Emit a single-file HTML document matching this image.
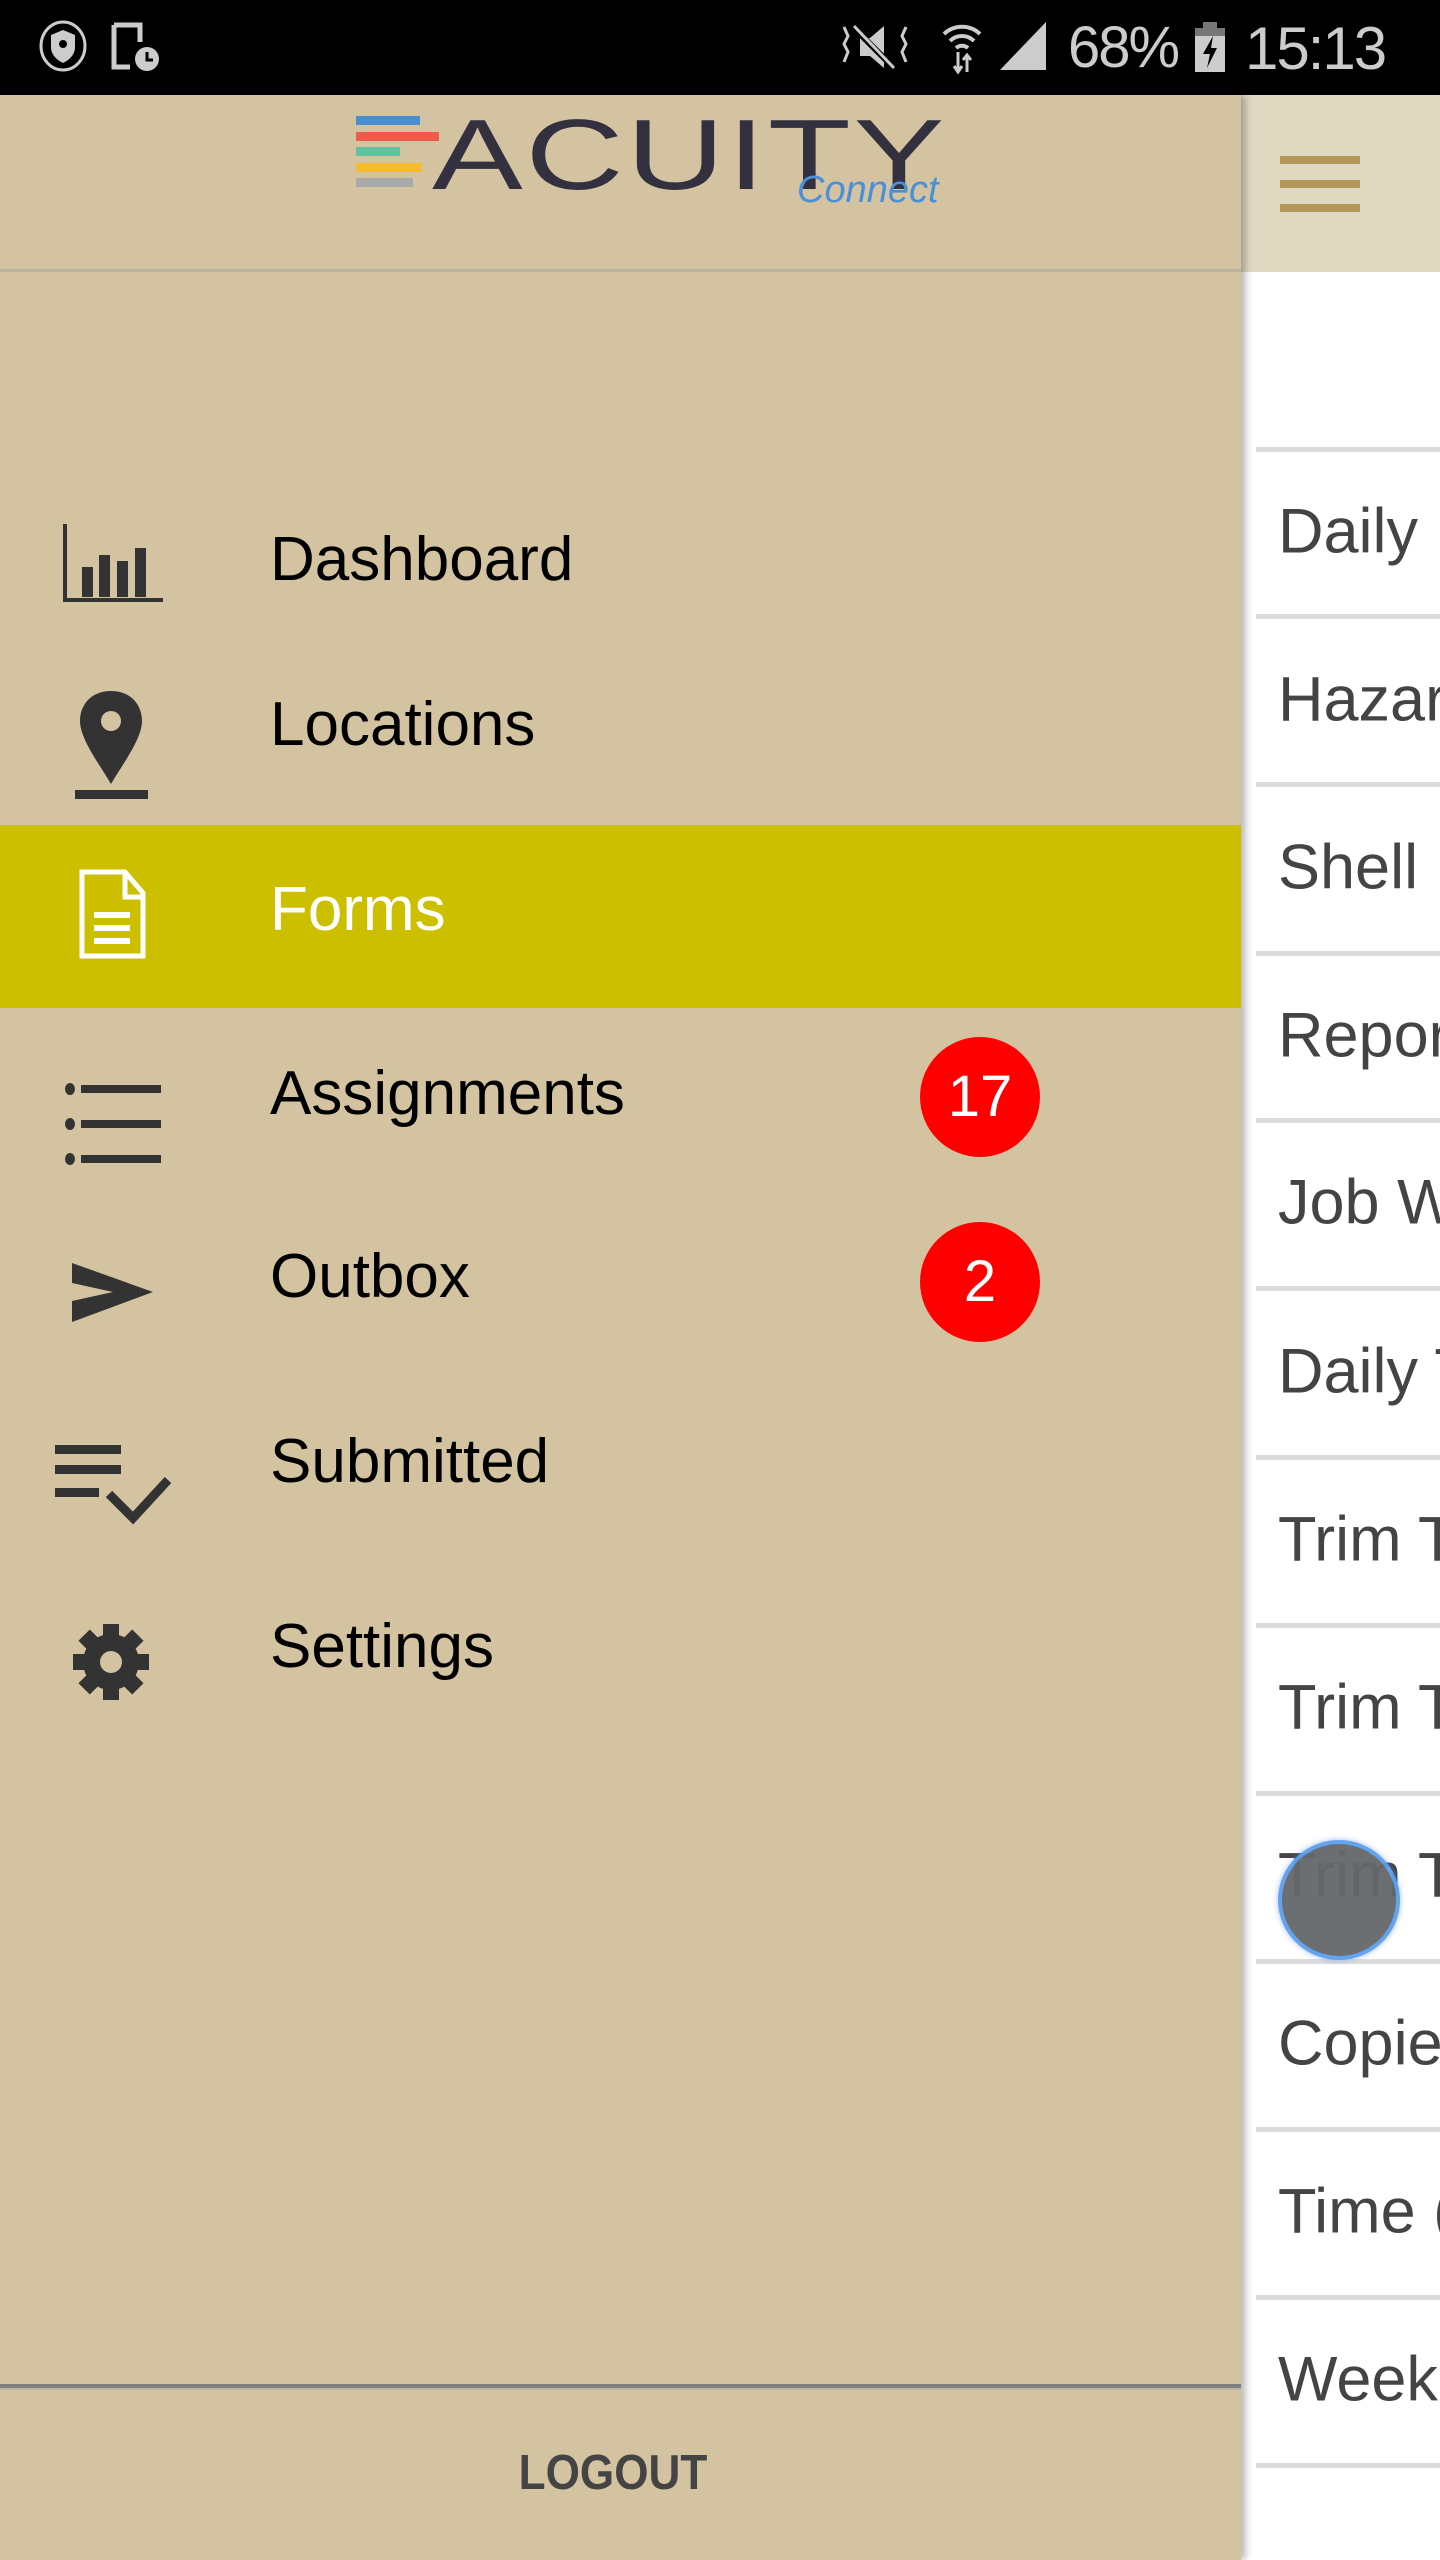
<!DOCTYPE html>
<html><head><meta charset="utf-8"><style>
*{margin:0;padding:0;box-sizing:border-box}
body{width:1440px;height:2560px;position:relative;overflow:hidden;background:#fff;font-family:"Liberation Sans",sans-serif}
.abs{position:absolute}
#status{left:0;top:0;width:1440px;height:95px;background:#000}
#drawer{left:0;top:95px;width:1241px;height:2465px;background:#d3c3a0;box-shadow:4px 0 8px rgba(0,0,0,.3);z-index:2}
#rhead{left:1241px;top:95px;width:199px;height:177px;background:#e2d9c2}
.ham{left:1280px;width:80px;height:8px;background:#b3965a}
.item{position:absolute;left:270px;font-size:62px;color:#000;line-height:1;transform:translateY(-50%)}
.ico{position:absolute;left:51px;width:120px;height:120px;transform:translateY(-50%)}
.badge{position:absolute;left:920px;width:120px;height:120px;border-radius:50%;background:#f00;color:#fff;font-size:58px;text-align:center;line-height:120px;transform:translateY(-50%)}
.sep{position:absolute;left:1256px;width:184px;height:5px;background:#dcdcdc}
.rt{position:absolute;left:1278px;font-size:63px;color:#444;white-space:nowrap;line-height:1;transform:translateY(-50%)}
</style></head><body>
<div id="status" class="abs">
<svg class="abs" style="left:38px;top:20px" width="50" height="52" viewBox="0 0 50 52"><ellipse cx="25" cy="26" rx="22" ry="24" fill="none" stroke="#ccc" stroke-width="3"/><path d="M25 10 L37 15 V27 C37 35 31 40 25 43 C19 40 13 35 13 27 V15Z" fill="#ccc"/><circle cx="25" cy="24" r="4" fill="#000"/></svg>
<svg class="abs" style="left:110px;top:22px" width="50" height="50" viewBox="0 0 50 50"><path d="M4 3 H30 V20 M4 3 V45 H20" fill="none" stroke="#ccc" stroke-width="5"/><circle cx="37" cy="37" r="12" fill="#ccc"/><path d="M37 30 V38 H43" stroke="#000" stroke-width="3" fill="none"/></svg>
<svg class="abs" style="left:840px;top:22px" width="70" height="50" viewBox="0 0 70 50"><path d="M4 5 L8 14 L4 22 L8 30 L4 40 M66 5 L62 14 L66 22 L62 30 L66 40" stroke="#ccc" stroke-width="3" fill="none"/><path d="M20 16 H30 L44 4 V46 L30 34 H20Z" fill="#ccc"/><path d="M14 6 L56 48" stroke="#000" stroke-width="6"/><path d="M14 4 L54 46" stroke="#ccc" stroke-width="3"/></svg>
<svg class="abs" style="left:940px;top:20px" width="44" height="54" viewBox="0 0 44 54"><path d="M4 14 A26 26 0 0 1 40 14 M10 21 A17 17 0 0 1 34 21 M16 28 A9 9 0 0 1 28 28" stroke="#ccc" stroke-width="4" fill="none"/><path d="M18 32 V52 M14 46 L18 52 L22 46 M27 52 V36 M23 40 L27 35 L31 40" stroke="#ccc" stroke-width="3" fill="none"/></svg>
<svg class="abs" style="left:1000px;top:22px" width="48" height="50" viewBox="0 0 48 50"><path d="M46 0 V48 H0Z" fill="#ccc"/></svg>
<div class="abs" style="left:1068px;top:14px;font-size:58px;color:#ccc;letter-spacing:-2px">68%</div>
<svg class="abs" style="left:1193px;top:22px" width="34" height="50" viewBox="0 0 34 50"><rect x="10" y="0" width="14" height="6" fill="#777"/><rect x="2" y="6" width="30" height="44" fill="#ccc"/><rect x="2" y="6" width="30" height="8" fill="#777"/><path d="M20 14 L10 32 H17 L14 46 L24 26 H18Z" fill="#000"/></svg>
<div class="abs" style="left:1245px;top:14px;font-size:60px;color:#ccc;letter-spacing:-2px">15:13</div>
</div>
<div id="rhead" class="abs"></div>
<div class="abs ham" style="top:156px"></div>
<div class="abs ham" style="top:180px"></div>
<div class="abs ham" style="top:204px"></div>
<div class="sep" style="top:447px"></div>
<div class="rt" style="top:532px">Daily I</div>
<div class="sep" style="top:614px"></div>
<div class="rt" style="top:700px">Hazard</div>
<div class="sep" style="top:782px"></div>
<div class="rt" style="top:868px">Shell I</div>
<div class="sep" style="top:951px"></div>
<div class="rt" style="top:1036px">Report</div>
<div class="sep" style="top:1118px"></div>
<div class="rt" style="top:1203px">Job W</div>
<div class="sep" style="top:1286px"></div>
<div class="rt" style="top:1372px">Daily T</div>
<div class="sep" style="top:1455px"></div>
<div class="rt" style="top:1540px">Trim T</div>
<div class="sep" style="top:1623px"></div>
<div class="rt" style="top:1708px">Trim T</div>
<div class="sep" style="top:1791px"></div>
<div class="rt" style="top:1876px">Trim T</div>
<div class="sep" style="top:1959px"></div>
<div class="rt" style="top:2044px">Copies</div>
<div class="sep" style="top:2127px"></div>
<div class="rt" style="top:2212px">Time (</div>
<div class="sep" style="top:2295px"></div>
<div class="rt" style="top:2380px">Weekly</div>
<div class="sep" style="top:2463px"></div>
<div class="abs" style="left:1278px;top:1840px;width:122px;height:120px;border-radius:50%;background:#66676b;border:4px solid #5aa0f0;box-shadow:0 0 6px rgba(90,130,240,.6);z-index:3;opacity:.95"></div>

<div id="drawer" class="abs">
<div class="abs" style="left:356px;top:21px;width:64px;height:9px;background:#4a8ed0"></div>
<div class="abs" style="left:356px;top:37px;width:83px;height:9px;background:#f05a4a"></div>
<div class="abs" style="left:356px;top:52px;width:44px;height:9px;background:#62c29e"></div>
<div class="abs" style="left:356px;top:68px;width:66px;height:9px;background:#f5bd2e"></div>
<div class="abs" style="left:356px;top:83px;width:57px;height:9px;background:#a9a9a9"></div>
<div class="abs" style="left:432px;top:10px;font-size:100px;color:#33313f;letter-spacing:2px;line-height:1;transform:scaleX(1.36);transform-origin:left">ACUITY</div>
<div class="abs" style="left:797px;top:74px;font-size:38px;color:#4a90d9;font-style:italic">Connect</div>
<div class="abs" style="left:0;top:174px;width:1241px;height:3px;background:#b8b3a4"></div>

<div class="abs" style="left:0;top:730px;width:1241px;height:183px;background:#ccbf00"></div>

<svg class="ico" style="top:465px" viewBox="0 0 120 120"><path d="M14 24 V100 H112" stroke="#333" stroke-width="4" fill="none"/><rect x="31" y="67" width="11" height="30" fill="#333"/><rect x="48" y="55" width="11" height="42" fill="#333"/><rect x="66" y="61" width="11" height="36" fill="#333"/><rect x="84" y="48" width="11" height="49" fill="#333"/></svg>
<div class="item" style="top:465px">Dashboard</div>
<svg class="ico" style="top:650px" viewBox="0 0 120 120"><path d="M60 6 C40 6 29 20 29 36 C29 54 49 80 60 99 C71 80 91 54 91 36 C91 20 80 6 60 6Z" fill="#333"/><circle cx="60" cy="36" r="10" fill="#d3c3a0"/><rect x="24" y="105" width="73" height="9" fill="#333"/></svg>
<div class="item" style="top:630px">Locations</div>
<svg class="ico" style="top:815px" viewBox="0 0 120 120"><path d="M31 22 H74 L92 43 V106 H31Z" fill="none" stroke="#fff" stroke-width="5"/><path d="M74 22 V47 H92" fill="none" stroke="#fff" stroke-width="5"/><rect x="43" y="62" width="36" height="6" fill="#fff"/><rect x="43" y="75" width="36" height="6" fill="#fff"/><rect x="43" y="88" width="36" height="6" fill="#fff"/></svg>
<div class="item" style="top:815px;color:#fff">Forms</div>
<svg class="ico" style="top:1029px" viewBox="0 0 120 120"><ellipse cx="19" cy="25" rx="5" ry="6" fill="#333"/><ellipse cx="19" cy="60" rx="5" ry="6" fill="#333"/><ellipse cx="19" cy="95" rx="5" ry="6" fill="#333"/><rect x="30" y="21" width="80" height="8" fill="#333"/><rect x="30" y="56" width="80" height="8" fill="#333"/><rect x="30" y="91" width="80" height="8" fill="#333"/></svg>
<div class="item" style="top:999px">Assignments</div>
<div class="badge" style="top:1002px">17</div>
<svg class="ico" style="top:1190px" viewBox="0 0 120 120"><path d="M21 38 L102 67 L21 97 L21 76 L62 67 L21 58Z" fill="#333"/></svg>
<div class="item" style="top:1182px">Outbox</div>
<div class="badge" style="top:1187px">2</div>
<svg class="ico" style="top:1385px" viewBox="0 0 120 120"><rect x="4" y="25" width="66" height="9" fill="#333"/><rect x="4" y="45" width="66" height="9" fill="#333"/><rect x="4" y="68" width="44" height="9" fill="#333"/><path d="M58 74 L82 98 L117 60" stroke="#333" stroke-width="9" fill="none"/></svg>
<div class="item" style="top:1367px">Submitted</div>
<svg class="ico" style="top:1567px" viewBox="-60 -60 120 120"><g fill="#333"><circle r="28"/><rect x="-8" y="-38" width="16" height="76"/><rect x="-8" y="-38" width="16" height="76" transform="rotate(45)"/><rect x="-8" y="-38" width="16" height="76" transform="rotate(90)"/><rect x="-8" y="-38" width="16" height="76" transform="rotate(135)"/></g><circle r="11" fill="#d3c3a0"/></svg>
<div class="item" style="top:1552px">Settings</div>

<div class="abs" style="left:0;top:2289px;width:1241px;height:4px;background:#808080"></div>
<div class="abs" style="left:0;top:2293px;width:1241px;height:2px;background:#b8b3a4"></div>
<div class="abs" style="left:0;top:2350px;width:1226px;text-align:center;font-size:49px;font-weight:bold;color:#444;transform:scaleX(.9)">LOGOUT</div>
</div>
</body></html>
